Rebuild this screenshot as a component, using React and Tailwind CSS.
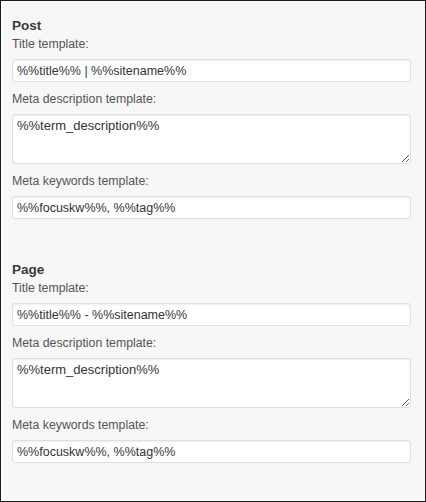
const sections = [
  {
    name: 'Post',
    title: '%%title%% | %%sitename%%',
    desc: '%%term_description%%',
    keywords: '%%focuskw%%, %%tag%%',
  },
  {
    name: 'Page',
    title: '%%title%% - %%sitename%%',
    desc: '%%term_description%%',
    keywords: '%%focuskw%%, %%tag%%',
  },
]

const inputCls =
  'block w-[399px] border border-[#dfdfdf] bg-white rounded-[3px] px-[4px] text-[#333] shadow-[inset_0_1px_2px_rgba(0,0,0,0.07)] focus:outline-none'

function Section({ s }) {
  return (
    <div>
      <h3 className="text-[13.5px] font-bold leading-[18px] text-[#3a3a3a]">{s.name}</h3>
      <label className="block text-[12.3px] leading-[18px] text-[#555] mb-[6px]">Title template:</label>
      <input readOnly value={s.title} className={`${inputCls} text-[12.5px] h-[23px] mb-[8px]`} />
      <label className="block text-[12.3px] leading-[18px] text-[#555] mb-[6px]">Meta description template:</label>
      <textarea readOnly value={s.desc} className={`${inputCls} text-[13px] h-[50px] py-[2px] leading-[18px] resize-y mb-[8px]`} />
      <label className="block text-[12.3px] leading-[18px] text-[#555] mb-[6px]">Meta keywords template:</label>
      <input readOnly value={s.keywords} className={`${inputCls} text-[12.5px] h-[23px]`} />
    </div>
  )
}

export default function App() {
  return (
    <div className="w-[426px] h-[502px] border border-[#1a1a1a] bg-[#f7f7f7] font-['Liberation_Sans',Arial,sans-serif]">
      <div className="h-full border-l-2 border-t border-[#fdfdfd] pl-[9px] pt-[15px] flex flex-col gap-[42px]">
        {sections.map((s) => (
          <Section key={s.name} s={s} />
        ))}
      </div>
    </div>
  )
}
